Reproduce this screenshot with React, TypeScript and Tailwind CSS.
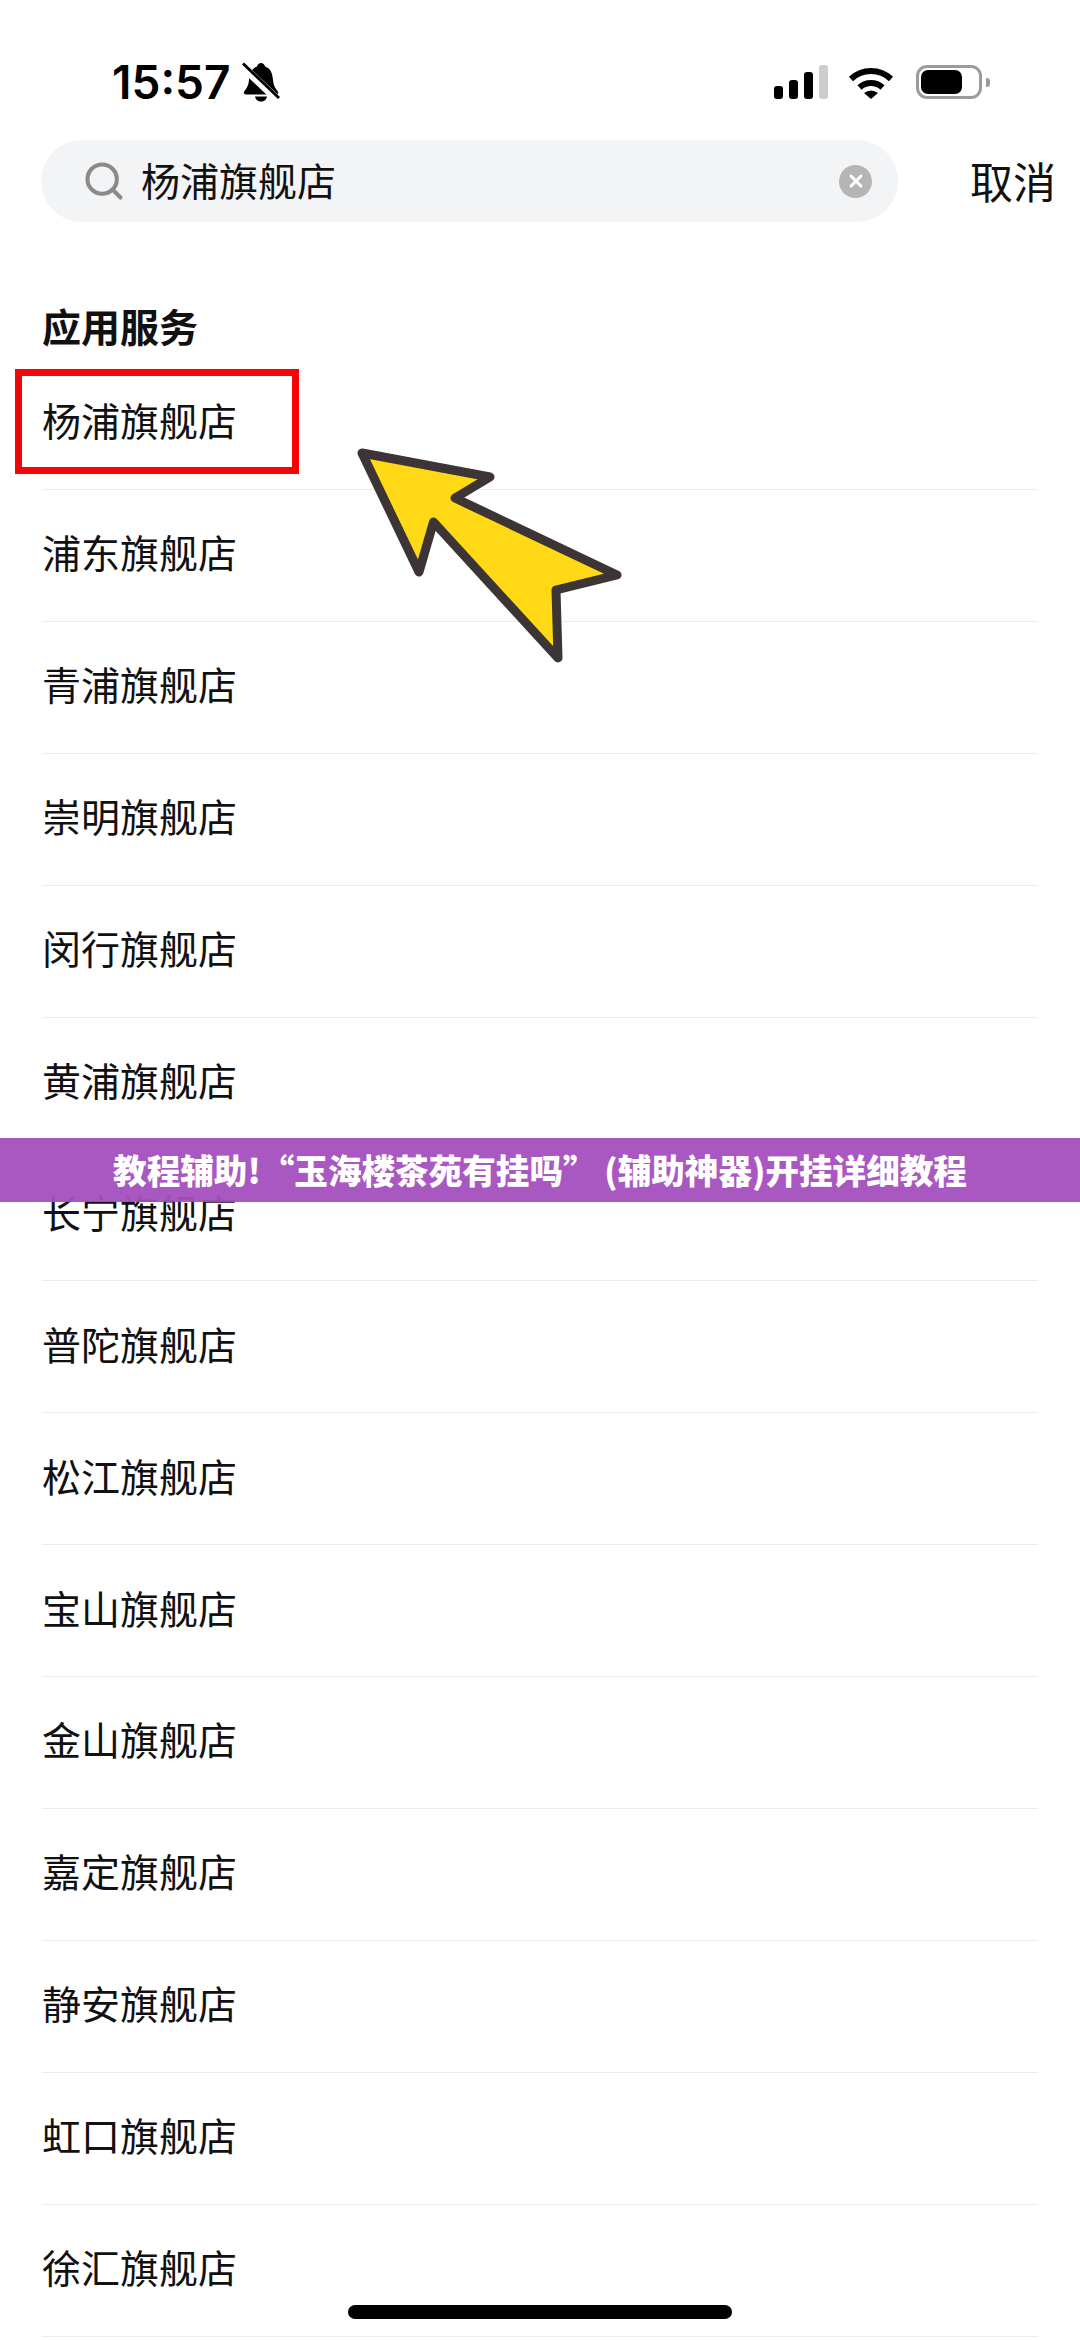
import React from "react";
import { Search, X } from "lucide-react";

const stores = [
	"杨浦旗舰店",
	"浦东旗舰店",
	"青浦旗舰店",
	"崇明旗舰店",
	"闵行旗舰店",
	"黄浦旗舰店",
	"长宁旗舰店",
	"普陀旗舰店",
	"松江旗舰店",
	"宝山旗舰店",
	"金山旗舰店",
	"嘉定旗舰店",
	"静安旗舰店",
	"虹口旗舰店",
	"徐汇旗舰店",
];

const BellSlash = () => (
	<svg width="38" height="40" viewBox="0 0 38 40" className="ml-[12px] mt-[-1px]">
		<path
			d="M19 1c-2 0-3.5 1.500-4 3.500C9 6.500 7.500 12 7 18c-.4 5-2 8-4.500 11-1.500 2-.5 3.500 1.500 3.500h30c2 0 3-1.500 1.500-3.500-2.500-3-4.100-6-4.500-11-.5-6-2-11.500-8-13.500C22.500 2.500 21 1 19 1z"
			fill="#000"
		/>
		<path d="M13 34.500h12c-.5 3-3 5-6 5s-5.500-2-6-5z" fill="#000" />
		<path d="M-1 3L37 39" stroke="#fff" strokeWidth="8" />
		<path d="M1 1.500L37 36" stroke="#000" strokeWidth="3" />
	</svg>
);

const SignalBars = () => (
	<div className="flex items-end gap-[6px] h-[34px]">
		<div className="w-[9px] h-[13px] rounded-[3px] bg-black" />
		<div className="w-[9px] h-[19px] rounded-[3px] bg-black" />
		<div className="w-[9px] h-[27px] rounded-[3px] bg-black" />
		<div className="w-[9px] h-[34px] rounded-[3px] bg-[#cdcdcd]" />
	</div>
);

const Wifi = () => (
	<svg width="46" height="34" viewBox="0 0 46 34" className="ml-[20px]">
		<path d="M3 14A29 29 0 0 1 43 14" fill="none" stroke="#000" strokeWidth="6" />
		<path d="M11.500 22.500A17 17 0 0 1 34.500 22.500" fill="none" stroke="#000" strokeWidth="6" />
		<path d="M16 28Q23 23 30 28L23 34Z" fill="#000" />
	</svg>
);

const Battery = () => (
	<div className="flex items-center ml-[22px]">
		<div className="w-[66px] h-[34px] rounded-[11px] border-[3px] border-[#9b9b9b] pl-[2px] py-[2px]">
			<div className="w-[41px] h-full rounded-[7px] bg-black" />
		</div>
		<div className="w-[4px] h-[9px] ml-[4px] rounded-r-[3px] bg-[#9b9b9b]" />
	</div>
);

const Arrow = () => (
	<svg
		width="270"
		height="220"
		viewBox="355 445 270 220"
		className="absolute left-[355px] top-[445px]"
	>
		<path
			d="M362 453L490 477L455 498L617 575L556 590L558 658L433.500 522L419 572Z"
			fill="#ffd916"
			stroke="#3d3535"
			strokeWidth="9"
			strokeLinejoin="round"
		/>
	</svg>
);

export default function App() {
	return (
		<div className="relative w-[1080px] h-[2341px] overflow-hidden bg-white text-[#111] font-['Noto_Sans_CJK_SC',sans-serif]">
			<div className="flex items-center justify-between h-[40px] mt-[62px] pl-[112px] pr-[90px]">
				<div className="flex items-center">
					<span className="text-[46px] leading-[40px] font-semibold text-black font-['Inter',sans-serif]">
						15:57
					</span>
					<BellSlash />
				</div>
				<div className="flex items-center">
					<SignalBars />
					<Wifi />
					<Battery />
				</div>
			</div>

			<div className="flex items-center h-[82px] mt-[38px] pl-[41px]">
				<div className="flex items-center w-[857px] h-[82px] rounded-full bg-[#f3f4f6] pl-[41px] pr-[26px]">
					<Search size={44} strokeWidth={2.200} className="text-[#8a8a8a] shrink-0" />
					<span className="ml-[15px] pb-[3px] text-[39px] leading-none">杨浦旗舰店</span>
					<div className="ml-auto flex items-center justify-center w-[33px] h-[33px] rounded-full bg-[#b5b5b5]">
						<X size={20} strokeWidth={3.500} className="text-white" />
					</div>
				</div>
				<span className="ml-[72px] pb-[2px] text-[43px] leading-none">取消</span>
			</div>

			<div className="mt-[77px] pl-[42px] h-[52px] text-[39px] leading-[52px] font-bold">
				应用服务
			</div>

			<ul className="px-[42px] mt-[7px]">
				{stores.map((name) => (
					<li
						key={name}
						className="flex items-center h-[131.930px] pb-[8px] border-b-[1.500px] border-[#ececec] text-[39px]"
					>
						{name}
					</li>
				))}
			</ul>

			<div className="absolute left-[15px] top-[369px] w-[284px] h-[105px] border-[7px] border-[#f50505]" />
			<Arrow />

			<div
				lang="zh-CN"
				className="absolute inset-x-0 top-[1138px] flex items-center justify-center h-[64px] bg-[#a54fbe]/95 text-white text-[33.600px] font-black font-['Noto_Sans_CJK_SC',sans-serif]"
			>
				教程辅助!“玉海楼茶苑有挂吗” (辅助神器)开挂详细教程
			</div>

			<div className="absolute left-[348px] top-[2305px] w-[384px] h-[14px] rounded-full bg-black" />
		</div>
	);
}
